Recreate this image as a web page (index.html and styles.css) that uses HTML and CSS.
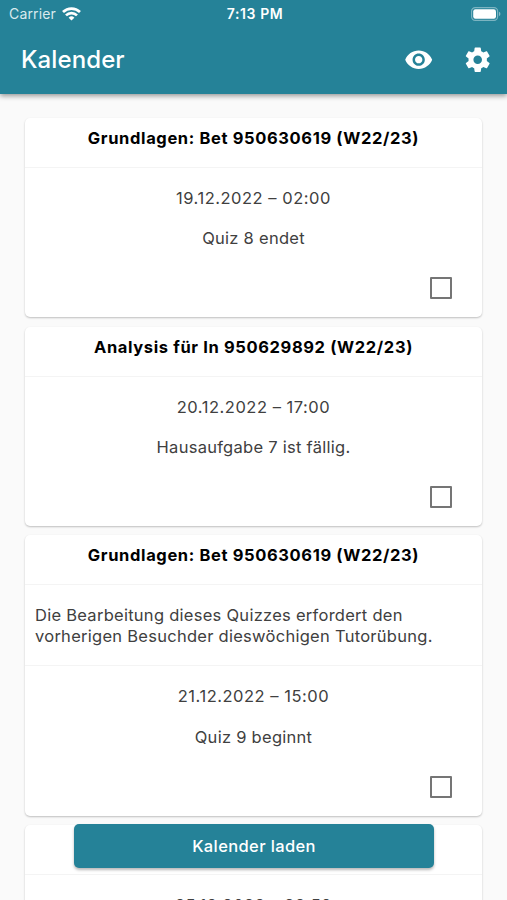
FILE: index.html
```html
<!DOCTYPE html>
<html lang="de">
<head>
  <meta charset="UTF-8">
  <meta name="viewport" content="width=device-width, initial-scale=1">
  <title>Kalender</title>
  <link rel="stylesheet" href="styles.css">
</head>
<body>

  <header class="header">
    <div class="statusbar">
      <div class="carrier">
        <span>Carrier</span>
        <svg width="19" height="14" viewBox="0 0 19 14" fill="none" stroke="#fff" stroke-width="2.7">
          <path d="M1 5a12.2 12.2 0 0 1 17 0"/>
          <path d="M4 8.4a7.8 7.8 0 0 1 11 0"/>
          <path d="M9.5 13.6l-2.9-2.9a4.1 4.1 0 0 1 5.8 0z" fill="#fff" stroke="none"/>
        </svg>
      </div>
      <div class="time">7:13 PM</div>
      <div class="battery">
        <svg width="30" height="14" viewBox="0 0 30 14">
          <rect x=".6" y=".6" width="26" height="12.8" rx="3.6" fill="none" stroke="#fff" stroke-opacity=".4" stroke-width="1.2"/>
          <rect x="2.2" y="2.2" width="22.8" height="9.6" rx="2.2" fill="#fff"/>
          <path d="M28 4.8a2.4 2.4 0 0 1 0 4.4z" fill="#fff" fill-opacity=".45"/>
        </svg>
      </div>
    </div>
    <div class="appbar">
      <h1>Kalender</h1>
      <div class="actions">
        <svg class="icon" viewBox="0 0 24 24"><path d="M12 4.5C7 4.5 2.73 7.61 1 12c1.73 4.39 6 7.5 11 7.5s9.27-3.11 11-7.5c-1.73-4.39-6-7.5-11-7.5zM12 17c-2.76 0-5-2.24-5-5s2.24-5 5-5 5 2.24 5 5-2.24 5-5 5zm0-8c-1.66 0-3 1.34-3 3s1.34 3 3 3 3-1.34 3-3-1.34-3-3-3z"/></svg>
        <svg class="icon" viewBox="0 0 24 24"><path d="M19.43 12.98c.04-.32.07-.64.07-.98s-.03-.66-.07-.98l2.11-1.65c.19-.15.24-.42.12-.64l-2-3.46c-.12-.22-.39-.3-.61-.22l-2.49 1c-.52-.4-1.08-.73-1.69-.98l-.38-2.65C14.46 2.18 14.25 2 14 2h-4c-.25 0-.46.18-.49.42l-.38 2.65c-.61.25-1.17.59-1.69.98l-2.49-1c-.23-.09-.49 0-.61.22l-2 3.46c-.13.22-.07.49.12.64l2.11 1.65c-.04.32-.07.65-.07.98s.03.66.07.98l-2.11 1.65c-.19.15-.24.42-.12.64l2 3.46c.12.22.39.3.61.22l2.49-1c.52.4 1.08.73 1.69.98l.38 2.65c.03.24.24.42.49.42h4c.25 0 .46-.18.49-.42l.38-2.65c.61-.25 1.17-.59 1.69-.98l2.49 1c.23.09.49 0 .61-.22l2-3.46c.12-.22.07-.49-.12-.64l-2.11-1.65zM12 15.5c-1.93 0-3.5-1.57-3.5-3.5s1.57-3.5 3.5-3.5 3.5 1.57 3.5 3.5-1.57 3.5-3.5 3.5z"/></svg>
      </div>
    </div>
  </header>

  <main class="list">
    <section class="card">
      <h2>Grundlagen: Bet 950630619 (W22/23)</h2>
      <div class="event">
        <p class="date">19.12.2022 – 02:00</p>
        <p>Quiz 8 endet</p>
        <span class="checkbox"></span>
      </div>
    </section>

    <section class="card">
      <h2>Analysis für In 950629892 (W22/23)</h2>
      <div class="event">
        <p class="date">20.12.2022 – 17:00</p>
        <p>Hausaufgabe 7 ist fällig.</p>
        <span class="checkbox"></span>
      </div>
    </section>

    <section class="card">
      <h2>Grundlagen: Bet 950630619 (W22/23)</h2>
      <p class="description">Die Bearbeitung dieses Quizzes erfordert den<br>vorherigen Besuchder dieswöchigen Tutorübung.</p>
      <div class="event">
        <p class="date">21.12.2022 – 15:00</p>
        <p>Quiz 9 beginnt</p>
        <span class="checkbox"></span>
      </div>
    </section>

    <section class="card">
      <h2></h2>
      <div class="event">
        <p class="date">25.12.2022 – 22:59</p>
      </div>
    </section>
  </main>

  <button class="load">Kalender laden</button>

</body>
</html>
```

FILE: styles.css
```css
* { box-sizing: border-box; margin: 0; padding: 0; }

body {
  font-family: Inter, sans-serif;
  background: #fafafa;
  color: #404040;
  height: 900px;
  overflow: hidden;
  display: flex;
  flex-direction: column;
}

/* Header */
.header {
  flex: none;
  height: 94px;
  background: #258298;
  color: #fff;
  box-shadow: 0 2px 5px rgba(0,0,0,0.4);
}
.statusbar {
  display: grid;
  grid-template-columns: 1fr auto 1fr;
  align-items: center;
  height: 27px;
  padding: 0 6px 0 9px;
}
.carrier {
  display: flex;
  align-items: center;
  gap: 6px;
  font-size: 14px;
  letter-spacing: 0.15px;
  color: #d9eaee;
}
.time {
  font-size: 14px;
  font-weight: 600;
  letter-spacing: 0.6px;
}
.battery {
  display: flex;
  justify-content: flex-end;
}
.appbar {
  display: flex;
  justify-content: space-between;
  align-items: center;
  height: 65px;
  padding: 0 15px 0 21px;
}
.appbar h1 {
  font-size: 24px;
  font-weight: 500;
  letter-spacing: 0.1px;
}
.actions {
  display: flex;
  gap: 29px;
}
.icon {
  width: 29.4px;
  height: 29.4px;
  fill: #fff;
}

/* Cards */
.list {
  flex: none;
  display: flex;
  flex-direction: column;
  gap: 9.3px;
  padding: 24px 25px 0;
}
.card {
  background: #fff;
  border-radius: 5px;
  box-shadow: 0 1px 2px rgba(0,0,0,0.24);
  font-size: 16.5px;
  line-height: 20.5px;
  letter-spacing: 0.27px;
}
.card h2 {
  height: 50px;
  padding-top: 10px;
  border-bottom: 1px solid #f4f4f4;
  font-size: 16.5px;
  font-weight: 700;
  letter-spacing: 0.63px;
  text-align: center;
  color: #000;
}
.description {
  height: 81px;
  padding: 20px 10px 0;
  border-bottom: 1px solid #f4f4f4;
}
.event {
  display: flex;
  flex-direction: column;
  align-items: center;
  gap: 19.7px;
  height: 149.4px;
  padding-top: 20px;
}
.date {
  letter-spacing: 0.52px;
}
.checkbox {
  align-self: flex-end;
  width: 22px;
  height: 22px;
  margin: 9px 30px 0 0;
  border: 2.4px solid #757575;
  border-radius: 1px;
}

/* Button floating over the list */
.load {
  position: absolute;
  left: 74px;
  bottom: 32px;
  width: 360px;
  height: 44px;
  border: none;
  border-radius: 5px;
  background: #258298;
  color: #fff;
  font-family: inherit;
  font-size: 16.5px;
  font-weight: 500;
  letter-spacing: 0.37px;
  box-shadow: 0 2px 3px rgba(0,0,0,0.28);
}
```
